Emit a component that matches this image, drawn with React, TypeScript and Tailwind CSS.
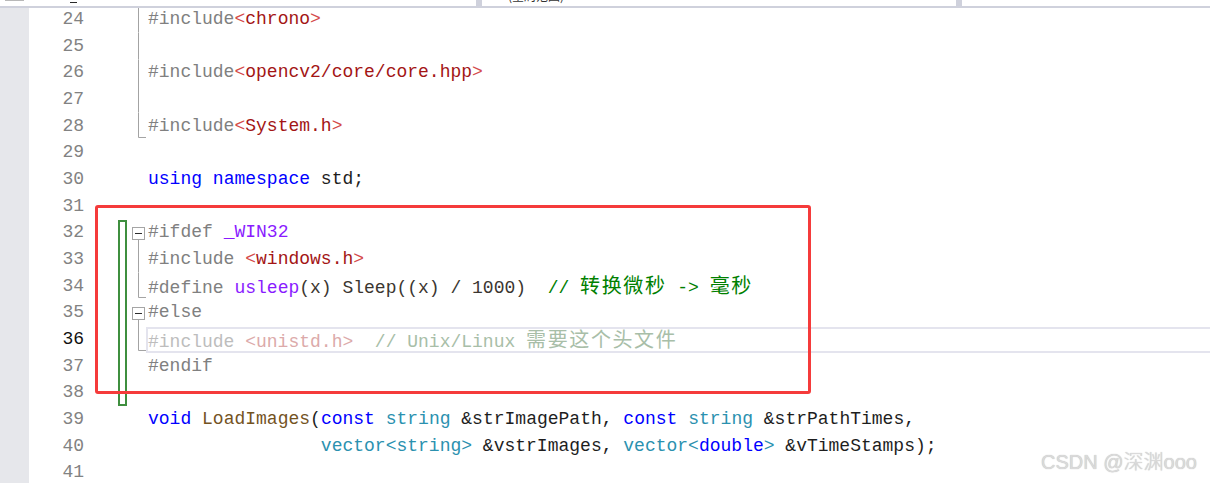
import React from 'react';

const P = '#808080'; // preprocessor
const S = '#a31515'; // include path
const B = '#d44a4a'; // angle brackets
const K = '#0000ff'; // keyword
const M = '#8a1bff'; // macro
const T = '#1e1e1e'; // plain
const T2 = '#3b3630';
const C = '#008000'; // comment
const F = '#74531f'; // function
const Ty = '#2b91af'; // type

type Tok = [string, string, boolean?];

const lines: { n: number; toks: Tok[]; fold?: 'line' | 'end' | 'box'; change?: 'top' | 'mid' | 'bot'; current?: boolean }[] = [
  { n: 24, toks: [['#include', P], ['<', B], ['chrono', S], ['>', B]], fold: 'line' },
  { n: 25, toks: [], fold: 'line' },
  { n: 26, toks: [['#include', P], ['<', B], ['opencv2/core/core.hpp', S], ['>', B]], fold: 'line' },
  { n: 27, toks: [], fold: 'line' },
  { n: 28, toks: [['#include', P], ['<', B], ['System.h', S], ['>', B]], fold: 'end' },
  { n: 29, toks: [] },
  { n: 30, toks: [['using', K], [' ', T], ['namespace', K], [' std;', T]] },
  { n: 31, toks: [] },
  { n: 32, toks: [['#ifdef ', P], ['_WIN32', M]], fold: 'box', change: 'top' },
  { n: 33, toks: [['#include ', P], ['<', B], ['windows.h', S], ['>', B]], fold: 'line', change: 'mid' },
  {
    n: 34,
    toks: [['#define ', P], ['usleep', M], ['(x) Sleep((x) / 1000)  ', T2], ['// ', C], ['转换微秒', C, true], [' -> ', C], ['毫秒', C, true]],
    fold: 'end',
    change: 'mid',
  },
  { n: 35, toks: [['#else', P]], fold: 'box', change: 'mid' },
  {
    n: 36,
    toks: [['#include ', '#bdbdbd'], ['<unistd.h>', '#dcaaaa'], ['  // Unix/Linux ', '#a8bea8'], ['需要这个头文件', '#a8bea8', true]],
    fold: 'end',
    change: 'mid',
    current: true,
  },
  { n: 37, toks: [['#endif', P]], change: 'mid' },
  { n: 38, toks: [], change: 'bot' },
  {
    n: 39,
    toks: [['void', K], [' ', T], ['LoadImages', F], ['(', T], ['const', K], [' ', T], ['string', Ty], [' &strImagePath, ', T], ['const', K], [' ', T], ['string', Ty], [' &strPathTimes,', T]],
  },
  {
    n: 40,
    toks: [['                ', T], ['vector<string>', Ty], [' &vstrImages, ', T], ['vector<', Ty], ['double', K], ['>', Ty], [' &vTimeStamps);', T]],
  },
  { n: 41, toks: [] },
];

function Fold({ kind }: { kind?: 'line' | 'end' | 'box' }) {
  return (
    <svg width="14" height="26.67" viewBox="0 0 14 26.67" className="shrink-0">
      {kind === 'line' && <line x1="6.5" y1="0" x2="6.5" y2="26.67" stroke="#a3a3a3" />}
      {kind === 'end' && <path d="M6.5 0 V24.5 H14" fill="none" stroke="#a3a3a3" />}
      {kind === 'box' && (
        <>
          <rect x="0.5" y="7.5" width="12" height="12" fill="#fff" stroke="#a5a5a5" />
          <line x1="3" y1="13.5" x2="10" y2="13.5" stroke="#2a2a2a" />
          <line x1="6.5" y1="19.5" x2="6.5" y2="26.67" stroke="#a3a3a3" />
        </>
      )}
    </svg>
  );
}

export default function App() {
  return (
    <div className="relative w-[1210px] h-[483px] overflow-hidden bg-white font-['Liberation_Mono','Noto_Sans_CJK_SC',monospace]">
      {/* navigation bar strip, mostly scrolled off */}
      <div className="relative z-10 flex h-[8px] border-b-2 border-[#cfd1dc] bg-white">
        <div className="flex w-[476px] items-start">
          <div className="ml-[5px] h-[1px] w-[19px] bg-[#b8b8b8]" />
          <div className="ml-[46px] mt-[2px] h-[1px] w-[7px] bg-[#2a2a2a]" />
        </div>
        <div className="w-[6px] bg-[#cfd1dc]" />
        <div className="w-[474px] overflow-hidden">
          <div className="ml-[26px] -mt-[11px] text-[12px] leading-[14px] text-[#333] font-['Noto_Sans_CJK_SC',sans-serif]">(全局范围)</div>
        </div>
        <div className="w-[6px] bg-[#cfd1dc]" />
        <div className="flex-1" />
      </div>

      <div className="-mt-[1.67px] flex flex-col">
        {lines.map((l) => (
          <div key={l.n} className="flex h-[26.67px] items-center text-[18px]">
            <div className="h-full w-[29px] shrink-0 bg-[#e6e7eb]" />
            <div className={`w-[55px] shrink-0 text-right ${l.current ? 'text-[#111]' : 'text-[#828282]'}`}>{l.n}</div>
            <div className="w-[34px] shrink-0" />
            <div
              className={`h-full w-[9px] shrink-0 ${
                l.change ? 'border-x-2 border-[#3f8f3f]' : ''
              } ${l.change === 'top' ? 'border-t-2' : ''} ${l.change === 'bot' ? 'border-b-2' : ''}`}
            />
            <div className="w-[5px] shrink-0" />
            <Fold kind={l.fold} />
            <div
              className={`flex h-[26px] flex-1 items-center whitespace-pre border-2 ${
                l.current ? 'border-[#e4e4ee]' : 'border-transparent'
              } border-r-0`}
            >
              <span>
                {l.toks.map(([t, c, cjk], i) =>
                  cjk ? (
                    <span key={i} className="font-['Noto_Sans_CJK_SC',sans-serif] text-[20px] tracking-[1.6px]" style={{ color: c }}>
                      {t}
                    </span>
                  ) : (
                    <span key={i} style={{ color: c }}>
                      {t}
                    </span>
                  )
                )}
              </span>
            </div>
          </div>
        ))}
      </div>

      {/* annotation box */}
      <div className="absolute left-[95px] top-[205px] h-[189px] w-[716px] rounded-[3px] border-[3px] border-[#f53b3b]" />

      {/* watermark */}
      <div className="absolute left-[1041px] top-[448px] text-[20px] font-light leading-[28px] text-[#dadada] font-['Liberation_Sans','Noto_Sans_CJK_SC',sans-serif] [text-shadow:0_0_1px_#b4b4b4]">
        CSDN @深渊ooo
      </div>
    </div>
  );
}
